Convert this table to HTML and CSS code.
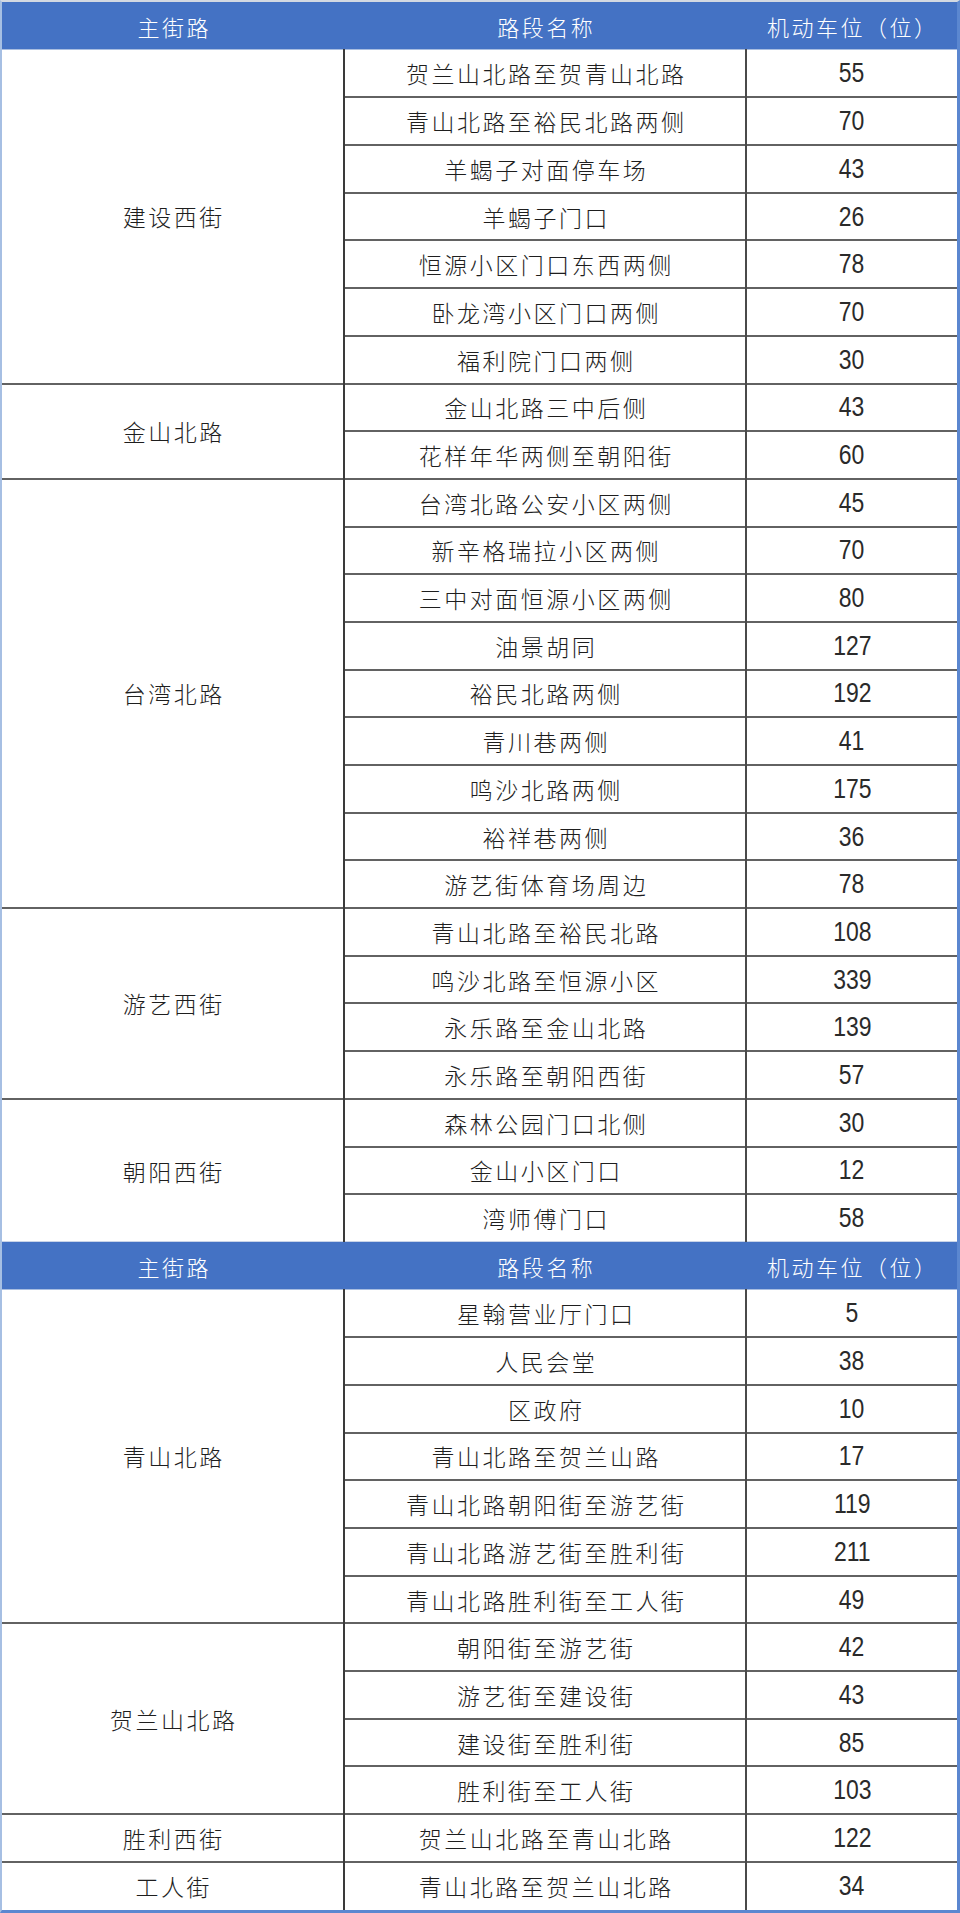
FILE: index.html
```html
<!DOCTYPE html>
<html lang="zh-CN">
<head>
<meta charset="utf-8">
<title>停车位分布</title>
<link rel="stylesheet" href="styles.css">
</head>
<body>
<div class="sheet">
<table class="grid">
<colgroup><col class="c1"><col class="c2"><col class="c3"></colgroup>
<tbody>
<tr class="hd hd1"><th>主街路</th><th>路段名称</th><th>机动车位（位）</th></tr>
<tr><td class="main" rowspan="7">建设西街</td><td class="name">贺兰山北路至贺青山北路</td><td class="num"><span>55</span></td></tr>
<tr><td class="name">青山北路至裕民北路两侧</td><td class="num"><span>70</span></td></tr>
<tr><td class="name">羊蝎子对面停车场</td><td class="num"><span>43</span></td></tr>
<tr><td class="name">羊蝎子门口</td><td class="num"><span>26</span></td></tr>
<tr><td class="name">恒源小区门口东西两侧</td><td class="num"><span>78</span></td></tr>
<tr><td class="name">卧龙湾小区门口两侧</td><td class="num"><span>70</span></td></tr>
<tr><td class="name">福利院门口两侧</td><td class="num"><span>30</span></td></tr>
<tr><td class="main" rowspan="2">金山北路</td><td class="name">金山北路三中后侧</td><td class="num"><span>43</span></td></tr>
<tr><td class="name">花样年华两侧至朝阳街</td><td class="num"><span>60</span></td></tr>
<tr><td class="main" rowspan="9">台湾北路</td><td class="name">台湾北路公安小区两侧</td><td class="num"><span>45</span></td></tr>
<tr><td class="name">新辛格瑞拉小区两侧</td><td class="num"><span>70</span></td></tr>
<tr><td class="name">三中对面恒源小区两侧</td><td class="num"><span>80</span></td></tr>
<tr><td class="name">油景胡同</td><td class="num"><span>127</span></td></tr>
<tr><td class="name">裕民北路两侧</td><td class="num"><span>192</span></td></tr>
<tr><td class="name">青川巷两侧</td><td class="num"><span>41</span></td></tr>
<tr><td class="name">鸣沙北路两侧</td><td class="num"><span>175</span></td></tr>
<tr><td class="name">裕祥巷两侧</td><td class="num"><span>36</span></td></tr>
<tr><td class="name">游艺街体育场周边</td><td class="num"><span>78</span></td></tr>
<tr><td class="main" rowspan="4">游艺西街</td><td class="name">青山北路至裕民北路</td><td class="num"><span>108</span></td></tr>
<tr><td class="name">鸣沙北路至恒源小区</td><td class="num"><span>339</span></td></tr>
<tr><td class="name">永乐路至金山北路</td><td class="num"><span>139</span></td></tr>
<tr><td class="name">永乐路至朝阳西街</td><td class="num"><span>57</span></td></tr>
<tr><td class="main" rowspan="3">朝阳西街</td><td class="name">森林公园门口北侧</td><td class="num"><span>30</span></td></tr>
<tr><td class="name">金山小区门口</td><td class="num"><span>12</span></td></tr>
<tr><td class="name">湾师傅门口</td><td class="num"><span>58</span></td></tr>
<tr class="hd hd2"><th>主街路</th><th>路段名称</th><th>机动车位（位）</th></tr>
<tr><td class="main" rowspan="7">青山北路</td><td class="name">星翰营业厅门口</td><td class="num"><span>5</span></td></tr>
<tr><td class="name">人民会堂</td><td class="num"><span>38</span></td></tr>
<tr><td class="name">区政府</td><td class="num"><span>10</span></td></tr>
<tr><td class="name">青山北路至贺兰山路</td><td class="num"><span>17</span></td></tr>
<tr><td class="name">青山北路朝阳街至游艺街</td><td class="num"><span>119</span></td></tr>
<tr><td class="name">青山北路游艺街至胜利街</td><td class="num"><span>211</span></td></tr>
<tr><td class="name">青山北路胜利街至工人街</td><td class="num"><span>49</span></td></tr>
<tr><td class="main" rowspan="4">贺兰山北路</td><td class="name">朝阳街至游艺街</td><td class="num"><span>42</span></td></tr>
<tr><td class="name">游艺街至建设街</td><td class="num"><span>43</span></td></tr>
<tr><td class="name">建设街至胜利街</td><td class="num"><span>85</span></td></tr>
<tr><td class="name">胜利街至工人街</td><td class="num"><span>103</span></td></tr>
<tr><td class="main">胜利西街</td><td class="name">贺兰山北路至青山北路</td><td class="num"><span>122</span></td></tr>
<tr><td class="main">工人街</td><td class="name">青山北路至贺兰山北路</td><td class="num"><span>34</span></td></tr>
</tbody>
</table>
</div>
</body>
</html>
```
FILE: styles.css
```css
html, body {
  margin: 0;
  padding: 0;
  background: #ffffff;
}

.sheet {
  width: 960px;
  box-sizing: border-box;
  border-top: 2px solid #d3d9e2;
  border-left: 2px solid #a6bfe3;
  border-right: 3px solid #5b87d0;
  border-bottom: 3px solid #5b87d0;
}

.grid {
  width: 955px;
  border-collapse: collapse;
  table-layout: fixed;
  font-family: "Noto Sans CJK SC", "Liberation Sans", sans-serif;
  font-weight: 300;
  color: #1e1e1e;
}

.c1 { width: 342px; }
.c2 { width: 402px; }
.c3 { width: 211px; }

.grid tr { height: 47.7px; }

.hd th {
  background: #4472c4;
  color: #ffffff;
  font-weight: 300;
  font-size: 22px;
  letter-spacing: 2.5px;
  text-indent: 2.5px;
  text-align: center;
  padding: 0;
  border: 0;
  border-bottom: 1px solid #a9bde0;
}

.hd1 { height: 47px; }
.hd2 { height: 50px; }
.hd2 th { border-top: 1px solid #c9d4e8; }

.grid td {
  padding: 0;
  text-align: center;
  vertical-align: middle;
  border-top: 2px solid #626262;
}

.hd + tr td { border-top: 0; }

.main {
  font-size: 23px;
  letter-spacing: 2.5px;
  text-indent: 2.5px;
}

.name {
  font-size: 23px;
  letter-spacing: 2.5px;
  text-indent: 2.5px;
  border-left: 2px solid #3a3a3a;
}

.num {
  font-family: "Liberation Sans", sans-serif;
  font-weight: 400;
  font-size: 28px;
  border-left: 2px solid #4a4a4a;
}

.num span {
  display: inline-block;
  transform: scaleX(0.82);
  color: #2a2a2a;
}
```
